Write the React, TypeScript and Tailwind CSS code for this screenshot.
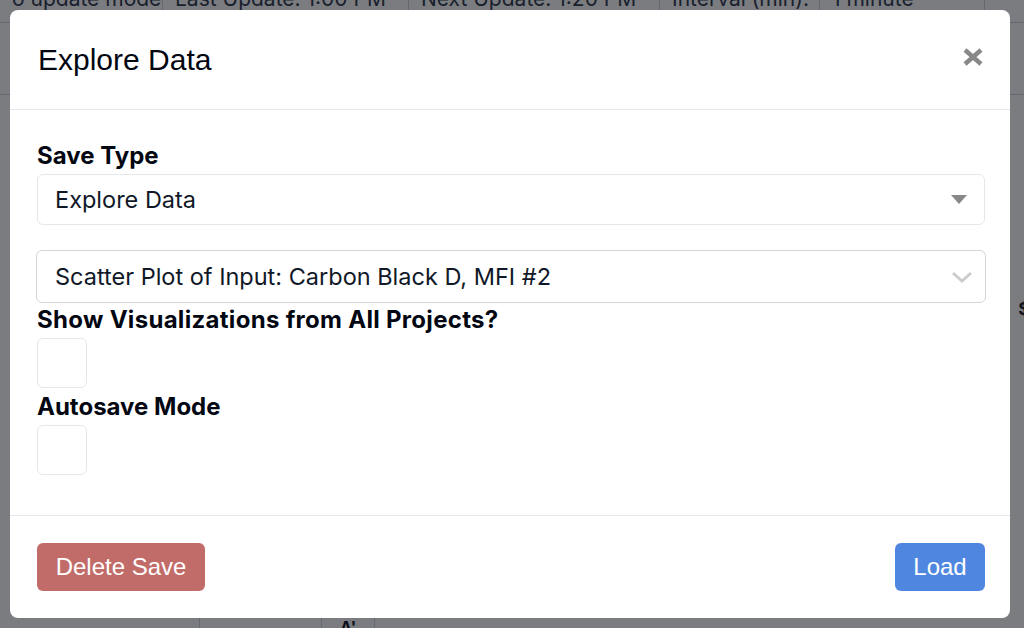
const Toolbar = () => {
  const cells = [
    { label: "o update mode", w: "w-[163px]" },
    { label: "Last Update:  1:00 PM", w: "w-[246px]" },
    { label: "Next Update:  1:20 PM", w: "w-[251px]" },
    { label: "Interval (min):", w: "w-[160px]" },
    { label: "1 minute", w: "w-[165px]" },
  ];
  return (
    <div className="flex h-[37px] -mt-[14px] border-b border-gray-300 text-[21px] leading-[26px] text-gray-700">
      {cells.map((c) => (
        <div key={c.label} className={`${c.w} border-r border-gray-300 px-3 whitespace-nowrap overflow-hidden`}>
          {c.label}
        </div>
      ))}
    </div>
  );
};

const Checkbox = () => (
  <div className="w-[50px] h-[50px] rounded-md border border-gray-200 bg-white" />
);

export default function App() {
  return (
    <div className="relative w-[1024px] h-[628px] overflow-hidden bg-white font-['Inter',sans-serif]">
      {/* PAGE BEHIND */}
      <div className="flex flex-col h-full">
        <Toolbar />
        <div className="h-[72px] border-b border-gray-300" />
        <div className="flex-1 flex justify-end">
          <div className="mt-[200px] mr-[-6px] text-[18px] font-bold text-gray-800">$</div>
        </div>
        <div className="flex h-[12px] text-[16px] font-bold text-gray-900">
          <div className="w-[200px] border-r border-gray-300" />
          <div className="w-[122px] border-r border-gray-300" />
          <div className="w-[53px] border-r border-gray-300 pl-[18px] leading-[22px]">A'</div>
        </div>
      </div>

      {/* OVERLAY */}
      <div className="absolute inset-0 bg-[rgba(1,3,11,0.52)] p-[10px] pr-[14px]">
        <div className="h-[608px] flex flex-col bg-white rounded-lg">
          {/* HEADER */}
          <div className="flex items-center justify-between h-[100px] px-[28px] border-b border-gray-200">
            <h1 className="text-[30px] text-gray-950 font-['Liberation_Sans',sans-serif]">Explore Data</h1>
            <svg width="20" height="18" viewBox="0 0 20 18" className="-mr-[1px] mb-[6px]">
              <path d="M2 2 L18 16 M18 2 L2 16" stroke="#888" strokeWidth="4.5" />
            </svg>
          </div>

          {/* BODY */}
          <div className="flex-1 pl-[27px] pr-[25px] pt-[33px]">
            <div className="text-[24px] font-bold text-gray-950 leading-[26px]">Save Type</div>
            <div className="mt-[5px] h-[51px] flex items-center justify-between rounded-md border border-gray-200 pl-[17px] pr-[17px]">
              <span className="text-[23.5px] text-gray-900">Explore Data</span>
              <svg width="16" height="9" viewBox="0 0 16 9">
                <path d="M0 0 H16 L8 9 Z" fill="#888" />
              </svg>
            </div>

            <div className="mt-[25px] -mx-px h-[53px] flex items-center justify-between rounded-md border border-gray-300 pl-[18px] pr-[12px]">
              <span className="text-[23.5px] text-gray-900">Scatter Plot of Input: Carbon Black D, MFI #2</span>
              <svg width="22" height="14" viewBox="0 0 22 14">
                <path d="M2 3 L11 11 L20 3" fill="none" stroke="#ccc" strokeWidth="3" />
              </svg>
            </div>

            <div className="mt-[1px] text-[24px] font-bold tracking-[0.3px] text-gray-950 leading-[32px]">
              Show Visualizations from All Projects?
            </div>
            <div className="mt-[2px]">
              <Checkbox />
            </div>
            <div className="mt-[3px] text-[24px] font-bold text-gray-950 leading-[32px]">Autosave Mode</div>
            <div className="mt-[2px]">
              <Checkbox />
            </div>
          </div>

          {/* FOOTER */}
          <div className="h-[103px] flex items-center justify-between pl-[27px] pr-[25px] border-t border-gray-200">
            <button className="h-[48px] w-[168px] rounded-md bg-[#c26c69] text-white text-[24px] font-['Liberation_Sans',sans-serif]">
              Delete Save
            </button>
            <button className="h-[48px] w-[90px] rounded-md bg-[#4f87e0] text-white text-[24px] font-['Liberation_Sans',sans-serif]">
              Load
            </button>
          </div>
        </div>
      </div>
    </div>
  );
}
